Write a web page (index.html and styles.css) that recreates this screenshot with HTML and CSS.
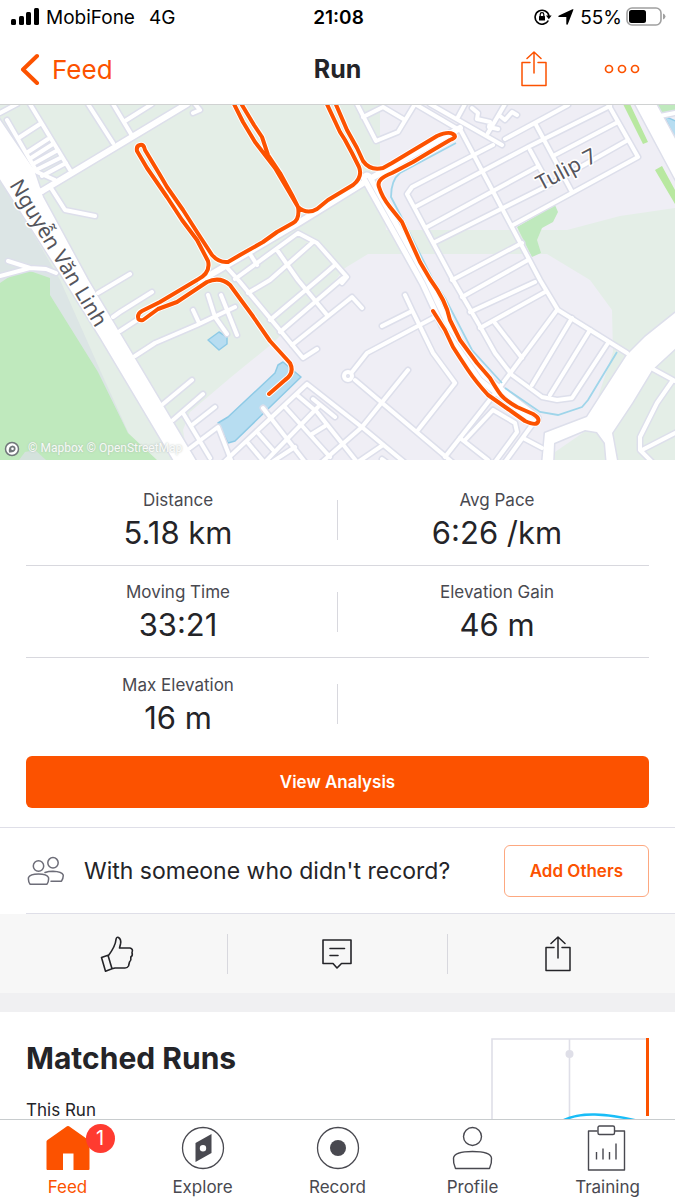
FILE: index.html
```html
<!DOCTYPE html>
<html lang="en">
<head>
  <meta charset="UTF-8">
  <meta name="viewport" content="width=device-width, initial-scale=1">
  <title>Run</title>
  <link rel="stylesheet" href="styles.css">
</head>
<body>
  <!-- Status bar -->
  <div class="status">
    <div class="status-left">
      <svg class="signal" width="29" height="18" viewBox="0 0 29 18" aria-hidden="true">
        <rect x="0" y="11" width="5" height="6" rx="1.5"/>
        <rect x="8" y="8" width="5" height="9" rx="1.5"/>
        <rect x="15" y="4" width="5" height="13" rx="1.5"/>
        <rect x="23" y="0" width="5" height="17" rx="1.5"/>
      </svg>
      <span>MobiFone</span>
      <span class="network">4G</span>
    </div>
    <div class="clock">21:08</div>
    <div class="status-right">
      <svg width="18" height="16" viewBox="0 0 18 16" aria-hidden="true">
        <path d="M14.3 11.5A7 7 0 1 1 15 7" fill="none" stroke="#000" stroke-width="1.6"/>
        <path d="M12 6.5h5.6l-2.8 3.8z"/>
        <rect x="5" y="7" width="6" height="4.6" rx="0.6"/>
        <path d="M6.2 7.5V5.5a1.8 1.8 0 0 1 3.6 0v2" fill="none" stroke="#000" stroke-width="1.2"/>
      </svg>
      <svg width="16" height="16" viewBox="0 0 16 16" aria-hidden="true">
        <path d="M15.500 0.500L9.800 15.200Q8.600 16.500 8.300 15V8H1Q-0.500 7.500 1 6.500L14.500 0.300Q15.600 0 15.500 0.500Z"/>
      </svg>
      <span>55%</span>
      <svg class="battery" width="40" height="20" viewBox="0 0 40 20" aria-hidden="true">
        <rect x="1" y="1" width="34" height="17" rx="5" fill="none" stroke="#a0a0a0" stroke-width="1.6"/>
        <rect x="3" y="3" width="17" height="13" rx="2.5"/>
        <path d="M37 6.5q2.500 1 2.500 3t-2.500 3z" fill="#a0a0a0"/>
      </svg>
    </div>
  </div>

  <!-- Header -->
  <header class="header">
    <a class="back" href="#feed">
      <svg width="20" height="32" viewBox="0 0 20 32" aria-hidden="true">
        <path d="M17 3L3 16.500L17 30" fill="none" stroke="#fc5200" stroke-width="4" stroke-linecap="round" stroke-linejoin="round"/>
      </svg>
      <span>Feed</span>
    </a>
    <h1>Run</h1>
    <div class="header-actions">
      <button type="button" aria-label="Share">
        <svg width="26" height="36" viewBox="0 0 26 36" fill="none" stroke="#fc5200" stroke-width="1.5" stroke-linejoin="round" stroke-linecap="round">
          <path d="M9 11.500H1v23h24v-23h-8M13 22V1M6 7.500L13 1l7 6.500"/>
        </svg>
      </button>
      <button type="button" aria-label="More">
        <svg width="36" height="10" viewBox="0 0 36 10" fill="none" stroke="#fc5200" stroke-width="1.7">
          <circle cx="5" cy="5" r="3.5"/>
          <circle cx="18" cy="5" r="3.5"/>
          <circle cx="31" cy="5" r="3.5"/>
        </svg>
      </button>
    </div>
  </header>

  <main class="content">
    <!-- Route map -->
    <svg class="map" viewBox="0 105 675 355" preserveAspectRatio="xMidYMid slice" role="img" aria-label="Route map">
      <defs>
        <g id="streets">
          <path d="M7 120L37 172L55 180M30 104L70 170M20 137L40 124M28 152L48 139M31 158L53 144M33 164L58 150M36 170L62 157M42 176L66 163M0 113L17 104"/>
          <path d="M88 104L113 143M113 104L131 134M125 121L152 104M195 104L200 110L193 113M51 188L65 210L95 216M8 261L30 268L46 269L56 273M0 276L30 268"/>
          <path d="M33 170V185L42 192M98 293L130 274M113 317L120 312L152 292M120 331L140 318M135 356L155 343L197 325L235 307M193 310L199 323M208 295L215 317L227 334M221 295L237 335"/>
          <path d="M163 404L192 380M173 420L203 394M192 425L215 407M183 413L210 458M190 448L218 427L231 460"/>
          <path d="M235 279L298 233L317 243L347 277L342 283M248 293L270 280L313 242M250 254L257 265M277 250L298 280L327 315M335 265L320 278L270 320M280 332L343 278M292 345L352 297L362 308M222 262L240 282L303 358L317 349"/>
          <path d="M357 104L376 141L398 132L415 104M363 117L383 107L405 120M430 104L502 145M415 104L461 131L540 280L558 310L627 353"/>
          <path d="M493 145L412 187L407 194L453 280L481 328L495 353L512 375L542 397L557 400L572 398L608 343"/>
          <path d="M415 207L528 147L610 106M427 227L537 167M435 242L545 187L628 140M618 122L555 155M608 104L638 157L513 225M535 123L572 192M530 150L542 172M505 139L568 105M505 104L488 133M458 117L465 104"/>
          <path d="M472 108L478 113L477 119L490 122L489 127L498 129M500 116L505 120L512 112L517 115"/>
          <path d="M522 243L452 280M528 260L462 297M535 282L470 312M545 292L480 328M495 323L522 358M557 310L500 387L445 457M572 318L532 385M590 330L550 395"/>
          <path d="M405 295L412 310L433 353L455 383L418 430M382 326L412 311M433 318L367 353L352 372M355 380L452 462M408 370L362 427L322 462M307 384L363 428L404 462M307 384L224 462"/>
          <path d="M263 408L305 462M297 395L317 412L357 462M313 399L335 417M285 407L330 457M318 407L265 462M258 433L273 450M248 443L264 462M312 434L325 426M295 447L272 462M383 445L358 462M382 459L386 462"/>
          <path d="M493 410L515 423L517 432L495 462M493 410L465 440M460 438L488 460M532 425L505 462M523 438L542 448M653 369L675 381M673 380L657 403L640 437V450L652 462M642 450L675 433M660 116L675 113"/>
          <circle cx="348" cy="376" r="4"/>
        </g>
        <path id="avenues" d="M42 191L187 104M200 281L300 222L368 180L460 128"/>
        <path id="parkway" d="M367 178L425 282L445 325L482 378L535 419"/>
        <path id="highways" d="M-4 114L34 170L43 197L88 280L199 466H177L100 337L60 273L-4 173ZM633 100H654L680 148V188ZM680 309L645 337L627 355L587 417L545 433L542 466H553L554 443L585 430L597 432L605 443L607 466H618L612 433L632 403L652 370L680 344Z"/>
        <path id="route" d="M269 394L285 380Q295 373 290 363L270 341L252 315L230 285Q220 276 207 282L177 302L158 309L143 320Q138 321 138 317T142 311L160 302L197 280Q211 273 208 261L197 240L182 220L167 197L147 168L137 151Q136 146 140 145T145 150L160 175L167 187L183 210L197 232L212 255Q219 263 228 262L240 255L263 242L277 232L293 223Q300 219 298 207L288 190L275 168L265 155L255 142L243 122L232 100M239 100L254 125L262 137L268 155L280 173L292 195L298 207Q307 215 317 209L328 200L353 185Q363 177 359 167L352 153L345 140L340 132L325 100M334 100L347 130L357 148L363 161Q370 171 383 168L392 163L417 148L437 136Q448 131 453 134T450 140L433 150L413 162L392 173Q376 179 379 187Q382 197 390 207T402 222L410 240L420 262L430 279Q438 290 443 300T450 320L460 340L477 363L490 378Q497 390 501 395T517 407L533 414Q540 418 538 422T525 421L508 409L488 395Q476 382 468 370T453 347L445 330L433 311"/>
      </defs>

      <!-- land -->
      <rect y="104" width="675" height="356" fill="#e4eee7"/>
      <path d="M380 104H675V208L620 216L567 230H386L380 180ZM368 254H547L590 280L612 310L613 352L587 430L555 452V460H188L183 430L190 412L230 378L273 343L333 283L345 268Z" fill="#efeef5"/>
      <path d="M0 176L60 280L100 370L130 436L50 300L0 285Z" fill="#dce5e5"/>
      <path d="M0 283L12 275L30 271L50 278V295L98 372L128 433L157 460H0Z" fill="#bfe9bd"/>
      <path d="M19 460L25 452L35 450L46 460Z" fill="#d4e2dc"/>
      <path d="M517 227L555 205L558 212L553 222L542 228L537 240L541 253L532 257ZM657 104H675V112H661Z" fill="#bfe9bd"/>
      <path d="M623 104H630L648 142L643 144ZM655 170L662 166L675 190V204Z" fill="#b8e8a0"/>
      <g fill="#b7ddf1" stroke="#8ecae6" stroke-width="1.5" stroke-linejoin="round">
        <path d="M218 423L228 417L275 373L278 365L283 362L301 377L235 441L228 443Z"/>
        <path d="M208 340L219 332L227 337V344L219 350Z"/>
        <path d="M664 116L678 122V144Z"/>
      </g>

      <!-- roads -->
      <g class="casing">
        <use href="#streets" stroke-width="7"/>
        <use href="#avenues" stroke-width="9"/>
        <use href="#parkway" stroke-width="14"/>
        <use href="#highways" stroke-width="3"/>
      </g>
      <g class="road">
        <use href="#streets" stroke-width="4"/>
        <use href="#avenues" stroke-width="6"/>
        <use href="#parkway" stroke-width="11"/>
        <use href="#highways" fill="#fff" stroke="none"/>
      </g>
      <use href="#parkway" fill="none" stroke="#e2e4ef" stroke-width="1"/>
      <path d="M456 143L400 173Q391 180 391 197L403 220L433 280L445 298L472 350L502 383M505 388L540 412L558 415L582 407L588 400L617 352" fill="none" stroke="#9fd5ea" stroke-width="1.8"/>

      <!-- recorded track -->
      <use href="#route" class="track-casing"/>
      <use href="#route" class="track"/>

      <text class="place" transform="translate(9 185) rotate(58.8)">Nguyễn Văn Linh</text>
      <text class="place" transform="translate(541 191) rotate(-28)">Tulip 7</text>

      <circle cx="12" cy="449" r="6.5" fill="#fff" stroke="#70777a" stroke-width="1.5"/>
      <path d="M9 452.500Q8 446 12.500 445.500Q16 446 15.500 449.500Q14.500 453 9 452.500Z" fill="#70777a"/>
      <circle cx="12.5" cy="448.8" r="1.3" fill="#fff"/>
      <text class="credit" x="28" y="452">© Mapbox © OpenStreetMap</text>
    </svg>

    <!-- Stats -->
    <section class="stats">
      <div class="stat-row">
        <div class="stat"><span class="label">Distance</span><span class="value">5.18 km</span></div>
        <i class="divider"></i>
        <div class="stat"><span class="label">Avg Pace</span><span class="value">6:26 /km</span></div>
      </div>
      <div class="stat-row">
        <div class="stat"><span class="label">Moving Time</span><span class="value">33:21</span></div>
        <i class="divider"></i>
        <div class="stat"><span class="label">Elevation Gain</span><span class="value">46 m</span></div>
      </div>
      <div class="stat-row">
        <div class="stat"><span class="label">Max Elevation</span><span class="value">16 m</span></div>
        <i class="divider"></i>
      </div>
      <button class="analysis" type="button">View Analysis</button>
    </section>

    <!-- Add others -->
    <section class="others">
      <div class="others-row">
        <svg width="38" height="30" viewBox="0 0 38 30" fill="none" stroke="#6d6d78" stroke-width="1.5" stroke-linejoin="round" stroke-linecap="round" aria-hidden="true">
          <circle cx="12.5" cy="10" r="5.2"/>
          <circle cx="27" cy="6.8" r="5.2"/>
          <path d="M4 28.200Q2 25 2.500 21.500Q4 18 12.500 18T22.500 21.500Q23 25 21 28.200ZM19 16.500Q22.500 15.200 27 15.200Q36 15.500 37.200 19Q37.500 22 35.500 25.200H25"/>
        </svg>
        <p>With someone who didn't record?</p>
        <button type="button">Add Others</button>
      </div>
    </section>

    <div class="actions">
      <button type="button" aria-label="Give kudos">
        <svg width="34" height="38" viewBox="0 0 34 38" fill="none" stroke="#242428" stroke-width="1.6" stroke-linejoin="round" stroke-linecap="round">
          <path d="M1.500 22.500L8 20.300L12 33.800L5.500 36.200ZM8.500 20.500Q15.500 11 16 4.500Q16.500 1.500 18.500 2.500Q21.500 4.500 20.500 9L19.500 13H30Q33.500 14 32 17.500Q33 20.500 30.800 22Q31.500 25 29.500 27L28.500 31Q27.500 33 25 33H15L12 33.800"/>
        </svg>
      </button>
      <i class="divider"></i>
      <button type="button" aria-label="Comment">
        <svg width="30" height="32" viewBox="0 0 30 32" fill="none" stroke="#242428" stroke-width="1.6" stroke-linejoin="round" stroke-linecap="round">
          <path d="M1 2H29V25.500H19.500L15 30L11 25.500H1ZM8 10.500H22.500M8 17.500H16"/>
        </svg>
      </button>
      <i class="divider"></i>
      <button type="button" aria-label="Share activity">
        <svg width="26" height="36" viewBox="0 0 26 36" fill="none" stroke="#242428" stroke-width="1.5" stroke-linejoin="round" stroke-linecap="round">
          <path d="M9 11.500H1v23h24v-23h-8M13 22V1M6 7.500L13 1l7 6.500"/>
        </svg>
      </button>
    </div>

    <!-- Matched runs -->
    <section class="matched">
      <div>
        <h2>Matched Runs</h2>
        <p>This Run</p>
      </div>
      <svg width="158" height="120" viewBox="0 0 158 120" fill="none" aria-hidden="true">
        <path d="M1 120V1H156M78.500 1V120" stroke="#dfdfe8" stroke-width="1.6"/>
        <circle cx="78.5" cy="16" r="4" fill="#dfdfe8"/>
        <path d="M66 86Q80 76 104 76.500T158 86" stroke="#19bdf7" stroke-width="2.5"/>
        <path d="M156.500 0V78" stroke="#fc5200" stroke-width="3"/>
      </svg>
    </section>
  </main>

  <!-- Tab bar -->
  <nav class="tabs">
    <a class="tab active" href="#feed">
      <span class="icon">
        <svg width="44" height="46" viewBox="0 0 44 46" aria-hidden="true">
          <path d="M0.500 16.500Q0.500 15.500 1.500 15L21 1.200Q22 0.600 23 1.200L42.500 15Q43.500 15.500 43.500 16.500V44Q43.500 45 42.500 45H27.500V28.500H17V45H1.500Q0.500 45 0.500 44Z" fill="#fc5200"/>
        </svg>
        <span class="badge">1</span>
      </span>
      <span>Feed</span>
    </a>
    <a class="tab" href="#explore">
      <span class="icon">
        <svg width="44" height="46" viewBox="0 0 44 46" aria-hidden="true">
          <circle cx="22" cy="23" r="20.5" fill="none" stroke="#494950" stroke-width="1.3"/>
          <path d="M14.500 18L30.500 9V28L14.500 37ZM22 20a3.200 3.200 0 1 0 0 6.400a3.200 3.200 0 1 0 0-6.400Z" fill="#494950" fill-rule="evenodd"/>
        </svg>
      </span>
      <span>Explore</span>
    </a>
    <a class="tab" href="#record">
      <span class="icon">
        <svg width="44" height="46" viewBox="0 0 44 46" aria-hidden="true">
          <circle cx="22" cy="23" r="20.5" fill="none" stroke="#494950" stroke-width="1.3"/>
          <circle cx="22" cy="23" r="8" fill="#494950"/>
        </svg>
      </span>
      <span>Record</span>
    </a>
    <a class="tab" href="#profile">
      <span class="icon">
        <svg width="44" height="46" viewBox="0 0 44 46" fill="none" stroke="#494950" stroke-width="1.4" stroke-linejoin="round" aria-hidden="true">
          <circle cx="21.5" cy="11.5" r="9"/>
          <path d="M4.500 43.500Q2 38 2.500 33Q3.500 26.500 21.500 26.500T40.500 33Q41 38 38.500 43.500Z"/>
        </svg>
      </span>
      <span>Profile</span>
    </a>
    <a class="tab" href="#training">
      <span class="icon">
        <svg width="44" height="46" viewBox="0 0 44 46" fill="none" stroke="#494950" stroke-width="1.4" stroke-linejoin="round" aria-hidden="true">
          <path d="M11.500 6H2.500V45H38.500V6H29M10.500 34.500V27M17 34.500V23.500M23.500 34.500V27M30 34.500V18.500"/>
          <rect x="12" y="1" width="16.500" height="8.500" rx="1.500"/>
        </svg>
      </span>
      <span>Training</span>
    </a>
  </nav>
</body>
</html>
```
FILE: styles.css
```css
* {
  box-sizing: border-box;
}
body {
  margin: 0;
  height: 100vh;
  display: flex;
  flex-direction: column;
  overflow: hidden;
  background: #fff;
  color: #242428;
  font-family: Inter, "Liberation Sans", sans-serif;
}
h1, h2, p {
  margin: 0;
}
a {
  color: inherit;
  text-decoration: none;
}
button {
  padding: 0;
  border: none;
  background: none;
  font: inherit;
  cursor: pointer;
}
svg {
  display: block;
}

/* status bar */
.status, .header {
  display: grid;
  grid-template-columns: 1fr auto 1fr;
  align-items: center;
  flex: none;
}
.status {
  height: 34px;
  padding: 0 9px 0 11px;
  color: #000;
  font-size: 19px;
}
.status-left, .status-right {
  display: flex;
  align-items: center;
  gap: 6px;
}
.status-right {
  justify-content: flex-end;
}
.status-right .battery {
  margin-left: -2px;
}
.network {
  margin-left: 8px;
}
.clock {
  font-weight: 600;
}

/* header */
.header {
  height: 70px;
  padding: 0 20px;
}
.header h1 {
  font-size: 25px;
  font-weight: 700;
}
.back {
  display: flex;
  align-items: center;
  gap: 12px;
  color: #fc5200;
  font-size: 26px;
}
.header-actions {
  display: flex;
  align-items: center;
  justify-content: flex-end;
  gap: 57px;
  padding-right: 15px;
}

.content {
  flex: 1;
  min-height: 0;
  overflow-y: auto;
  scrollbar-width: none;
  border-top: 1px solid #d0d2d2;
}

/* map */
.map {
  width: 100%;
  height: auto;
}
.casing, .road {
  fill: none;
  stroke-linecap: round;
  stroke-linejoin: round;
}
.casing {
  stroke: #dddfeb;
}
.road {
  stroke: #fff;
}
.track, .track-casing {
  fill: none;
  stroke: #fc5200;
  stroke-width: 4;
  stroke-linecap: round;
  stroke-linejoin: round;
}
.track-casing {
  stroke: #fff;
  stroke-width: 6;
}
.place {
  font-family: "Noto Sans", sans-serif;
  font-size: 21px;
  fill: #55555c;
  stroke: #fff;
  stroke-width: 3px;
  stroke-linejoin: round;
  paint-order: stroke;
}
.credit {
  font-family: Roboto, sans-serif;
  font-size: 12px;
  fill: #fff;
  fill-opacity: 0.9;
  text-shadow: 0 0 2px #a9b4ae;
}

/* stats */
.stats {
  padding: 14px 26px 19px;
  border-bottom: 1px solid #dfdfe8;
}
.stat-row {
  display: grid;
  grid-template-columns: 1fr 1px 1fr;
  column-gap: 7px;
  align-items: center;
  height: 92px;
  border-bottom: 1px solid #d8d8de;
}
.stat-row:nth-of-type(3) {
  border-bottom: none;
}
.stat {
  display: flex;
  flex-direction: column;
  align-items: center;
  gap: 3px;
}
.label {
  font-size: 17px;
  line-height: 24px;
  color: #494950;
}
.value {
  font-size: 31px;
  line-height: 36px;
}
.divider {
  width: 1px;
  height: 40px;
  background: #d8d8de;
}
.analysis {
  display: block;
  width: 100%;
  height: 52px;
  margin-top: 6px;
  border-radius: 6px;
  background: #fc5200;
  color: #fff;
  font-size: 17px;
  font-weight: 600;
}

/* add others */
.others {
  padding-left: 26px;
}
.others-row {
  display: flex;
  align-items: center;
  height: 86px;
  padding-right: 26px;
  border-bottom: 1px solid #dfdfe8;
}
.others p {
  flex: 1;
  margin-left: 20px;
  font-size: 23px;
}
.others button {
  height: 52px;
  padding: 0 25px;
  border: 1px solid #fda880;
  border-radius: 6px;
  color: #fc5200;
  font-size: 17px;
  font-weight: 600;
}

/* kudos, comment, share */
.actions {
  display: grid;
  grid-template-columns: 1fr 1px 1fr 1px 1fr;
  align-items: center;
  justify-items: center;
  height: 79px;
  padding: 0 7px;
  background: #f7f7f7;
}

/* matched runs */
.matched {
  display: flex;
  justify-content: space-between;
  padding: 26px;
  border-top: 19px solid #f0f0f2;
}
.matched h2 {
  font-size: 30px;
  line-height: 40px;
}
.matched p {
  margin-top: 20px;
  font-size: 17px;
  line-height: 24px;
}

/* tab bar */
.tabs {
  display: grid;
  grid-template-columns: repeat(5, 1fr);
  flex: none;
  height: 81px;
  padding-top: 5px;
  border-top: 1px solid #c8ccce;
  background: #fff;
}
.tab {
  display: flex;
  flex-direction: column;
  align-items: center;
  gap: 4px;
  color: #494950;
  font-size: 17px;
  line-height: 24px;
}
.active {
  color: #fc5200;
}
.icon {
  position: relative;
}
.badge {
  position: absolute;
  top: -1px;
  left: 40px;
  width: 29px;
  height: 29px;
  border-radius: 50%;
  background: #ff3b30;
  color: #fff;
  font-size: 20px;
  line-height: 29px;
  text-align: center;
}
```
